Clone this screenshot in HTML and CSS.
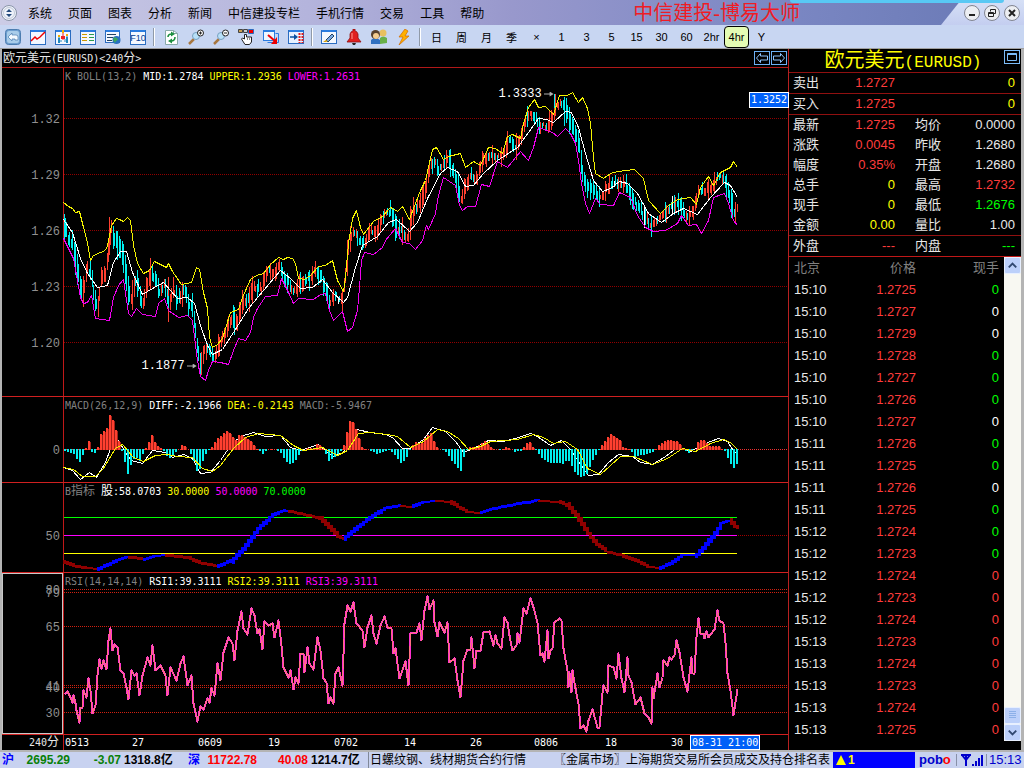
FILE: index.html
```html
<!DOCTYPE html>
<html lang="zh-CN">
<head>
    <meta charset="UTF-8">
    <meta name="viewport" content="width=device-width, initial-scale=1.0">
    <title>中信建投-博易大师</title>
    <link rel="stylesheet" href="styles.css">
</head>
<body>
    <header class="titlebar">
        <svg class="app-icon" viewBox="0 0 18 18">
            <circle cx="9" cy="9" r="7.5" fill="#eef2fa" stroke="#8a94a8"/>
            <circle cx="9" cy="9" r="5.5" fill="none" stroke="#c2cad8"/>
            <path d="M6 8l3-3 3 3zM6 10l3 3 3-3z" fill="#234a7c"/>
            <path d="M8 8h2v2H8z" fill="#eef2fa"/>
        </svg>
        <nav class="menu">
            <button>系统</button>
            <button>页面</button>
            <button>图表</button>
            <button>分析</button>
            <button>新闻</button>
            <button>中信建投专栏</button>
            <button>手机行情</button>
            <button>交易</button>
            <button>工具</button>
            <button>帮助</button>
        </nav>
        <h1 class="app-name">中信建投-博易大师</h1>
        <div class="window-buttons">
            <button aria-label="最小化"><svg viewBox="0 0 18 18"><circle cx="9" cy="9" r="7.5"/><path d="M6 11h6" stroke-width="2"/></svg></button>
            <button aria-label="还原"><svg viewBox="0 0 18 18"><circle cx="9" cy="9" r="7.5"/><path d="M7.5 7.500v-2h5v4h-2M5.500 8.500h5v4h-5zM5.500 9.500h5"/></svg></button>
            <button aria-label="关闭"><svg viewBox="0 0 18 18"><circle cx="9" cy="9" r="7.5"/><path d="M6 6l6 6M12 6l-6 6" stroke-width="2"/></svg></button>
        </div>
        <div class="top-tab"></div>
    </header>

    <div class="toolbar">
        <button aria-label="返回"><svg viewBox="0 0 16 16"><rect x=".5" y=".5" width="15" height="15" rx="3" fill="#6f9fcf" stroke="#4c7db0"/><rect x="2" y="2" width="12" height="12" rx="2" fill="#a9cdea"/><path d="M3 8l4-4v2h4q2 0 2 2v3h-3v-1H7v2z" fill="#f4faff" stroke="#4c7db0" stroke-width=".7"/></svg></button>
        <button aria-label="分时"><svg viewBox="0 0 16 16"><rect x=".5" y="1.500" width="15" height="14" fill="#f4f8ff" stroke="#2a6cc0"/><path d="M1 2h14" stroke="#2a7ce0" stroke-width="2"/><path d="M1 12l4-4 2 2 3-2 5-5" stroke="#e00" stroke-width="1.500" fill="none"/></svg></button>
        <button aria-label="K线"><svg viewBox="0 0 16 16"><rect x=".5" y="1.500" width="15" height="14" fill="#f4f8ff" stroke="#2a6cc0"/><path d="M1 2h14" stroke="#2a7ce0" stroke-width="2"/><path d="M3 9h2v5H3zM11 8h2v6h-2z" fill="#28b"/><path d="M6 7h4v3H6z" fill="#e22"/><path d="M8 4v7" stroke="#e22"/><path d="M4 7v7M12 6v8M6 11v2M10 10v3" stroke="#28b"/><path d="M7 1h2v3H7zM3 6h2v2H3zM11 5h2v2h-2z" fill="#f0b000"/></svg></button>
        <button aria-label="报价"><svg viewBox="0 0 16 16"><rect x=".5" y="1.500" width="15" height="14" fill="#f4f8ff" stroke="#2a6cc0"/><path d="M1 2h14" stroke="#2a7ce0" stroke-width="2"/><path d="M2 5.500h5M2 8.500h5M2 11.500h5" stroke="#c90"/><path d="M9 5.500h5M9 8.500h5M9 11.500h5" stroke="#2a9a50"/></svg></button>
        <button aria-label="资讯"><svg viewBox="0 0 16 16"><rect x=".5" y="1.500" width="14" height="12" fill="#f4f8ff" stroke="#2a6cc0"/><path d="M1 2h14" stroke="#2a7ce0" stroke-width="2"/><path d="M2 5.500h9M2 8.500h6M2 11.500h5" stroke="#246"/><circle cx="11.500" cy="11" r="4" fill="#2a70c0"/><path d="M9 8l3 1 1 2-2 1-1 2-2-3z" fill="#3aa860"/></svg></button>
        <button aria-label="F10"><svg viewBox="0 0 16 16"><rect x=".5" y="1.500" width="15" height="14" fill="#f4f8ff" stroke="#2a6cc0"/><path d="M1 2h14" stroke="#2a7ce0" stroke-width="2"/><text x="8" y="12" class="icon-text">F10</text></svg></button>
        <span class="sep"></span>
        <button aria-label="刷新"><svg viewBox="0 0 16 16"><path d="M2.500 1.500h8l4 3v11h-12z" fill="#fff" stroke="#8aa"/><path d="M10.500 1.500v3h4" fill="none" stroke="#8aa"/><path d="M5 8q0-3 4-3M12 8q0 4-4 4" fill="none" stroke="#1c9040" stroke-width="1.600"/><path d="M8 2.500l4 2.500-4 2.500zM9 9.500L5 12l4 2.500z" fill="#1c9040"/></svg></button>
        <button aria-label="放大"><svg viewBox="0 0 16 16"><path d="M1 15l5-5" stroke="#a87840" stroke-width="2.500"/><circle cx="8" cy="7" r="3.500" fill="#b8e0f8" stroke="#78a0c0"/><circle cx="12.500" cy="4" r="3" fill="#fff" stroke="#222"/><path d="M11 4h3M12.500 2.500v3" stroke="#222"/></svg></button>
        <button aria-label="缩小"><svg viewBox="0 0 16 16"><path d="M1 15l5-5" stroke="#a87840" stroke-width="2.500"/><circle cx="8" cy="7" r="3.500" fill="#b8e0f8" stroke="#78a0c0"/><circle cx="12.500" cy="4" r="3" fill="#fff" stroke="#222"/><path d="M11 4h3" stroke="#222"/></svg></button>
        <button aria-label="选择"><svg viewBox="0 0 16 16"><path d="M.5.5h4v3h-4z" fill="#cba050" stroke="#444"/><path d="M5.500 .5h4v3h-4z" fill="#ccc" stroke="#444"/><path d="M10.500 .5h5v4h-5z" fill="#e00" stroke="#2a6cc0"/><path d="M6.500 10V5.500h2V8h5v5l-2 2.500H7L3.500 10l1-1z" fill="#fff" stroke="#222"/><path d="M9.500 8v3M11.500 8v3" stroke="#888"/></svg></button>
        <button aria-label="弹出"><svg viewBox="0 0 16 16"><rect x=".5" y="1.500" width="11" height="10" fill="#eef6ff" stroke="#2a7ce0"/><path d="M1 2h11" stroke="#2a7ce0" stroke-width="2"/><path d="M4.500 13.500h11v-9h-3" fill="none" stroke="#2a7ce0"/><path d="M5 6l7 6" stroke="#e00" stroke-width="2"/><path d="M14 8v7H8z" fill="#e00"/></svg></button>
        <button aria-label="右移"><svg viewBox="0 0 16 16"><rect x=".5" y="1.500" width="15" height="13" fill="#e8f2ff" stroke="#2a6cc0"/><path d="M1 2h14" stroke="#2a7ce0" stroke-width="2"/><path d="M2 8h5" stroke="#0a50a0" stroke-width="1.500"/><path d="M6 5l4 3-4 3z" fill="#0a50a0"/><path d="M11.500 4v10M14.500 4v10" stroke="#e02020" stroke-width="2" stroke-dasharray="2 1"/></svg></button>
        <span class="sep"></span>
        <button aria-label="画线"><svg viewBox="0 0 16 16"><rect x=".5" y="1.500" width="15" height="13" fill="#f4f8ff" stroke="#2a6cc0"/><path d="M1 2h14" stroke="#2a7ce0" stroke-width="2"/><path d="M5 11l6-6 2 2-6 6z" fill="#7aa8e0" stroke="#246"/><path d="M2 13h3l2-1-2-1z" fill="#d8a000"/></svg></button>
        <button aria-label="预警"><svg viewBox="0 0 16 16"><path d="M1 13l3-4V5q1-3 3-3V0h2v2q2 0 3 3v4l3 4z" fill="#e02020" stroke="#901010" stroke-width=".8"/><path d="M6 4v6" stroke="#ff9a90"/><path d="M6 14h4l-1 2H7z" fill="#222"/></svg></button>
        <button aria-label="用户"><svg viewBox="0 0 16 16"><path d="M9 15V9q3-3 7 0v5z" fill="#68b048"/><circle cx="12" cy="4" r="3.500" fill="#e8c060"/><path d="M0 15V11q4-4 9 0v4z" fill="#3070c0"/><circle cx="4.500" cy="5.500" r="4.500" fill="#58402c"/><circle cx="5" cy="7" r="3" fill="#f4cc90"/></svg></button>
        <button aria-label="闪电"><svg viewBox="0 0 16 16"><path d="M9 0L3 8h4l-4 8 10-9H9l3-5z" fill="#ffb000" stroke="#d06800" stroke-width=".7"/></svg></button>
        <span class="sep"></span>
        <button>日</button>
        <button>周</button>
        <button>月</button>
        <button>季</button>
        <button>×</button>
        <button>1</button>
        <button>3</button>
        <button>5</button>
        <button>15</button>
        <button>30</button>
        <button>60</button>
        <button>2hr</button>
        <button class="active">4hr</button>
        <button>Y</button>
    </div>

    <main>
        <section class="charts">
            <div class="chart-head">
                <h2>欧元美元<span class="mono">(EURUSD)&lt;240</span>分<span class="mono">&gt;</span></h2>
                <div class="nav-buttons">
                    <button aria-label="上一个"><svg viewBox="0 0 14 12"><path d="M1.500 6l4-4.500v2.500h7v4h-7v2.500z"/></svg></button>
                    <button aria-label="下一个"><svg viewBox="0 0 14 12"><path d="M12.500 6l-4-4.500v2.500h-7v4h7v2.500z"/></svg></button>
                </div>
            </div>

            <div class="panel panel-price">
                <svg class="axis" viewBox="2 68 61 328">
                    <text x="60" y="123">1.32</text>
                    <text x="60" y="179">1.29</text>
                    <text x="60" y="235">1.26</text>
                    <text x="60" y="291">1.23</text>
                    <text x="60" y="347">1.20</text>
                </svg>
                <div class="plot">
                    <div class="legend"><span>K BOLL(13,2)</span><b class="white">MID:1.2784</b><b class="yellow">UPPER:1.2936</b><b class="magenta">LOWER:1.2631</b></div>
                    <svg id="price" viewBox="64 85 724 311" preserveAspectRatio="none"></svg>
                    <span class="callout high">1.3333<i></i></span>
                    <span class="callout low">1.1877<i></i></span>
                    <span class="price-mark">1.3252</span>
                </div>
            </div>

            <div class="panel panel-macd">
                <svg class="axis" viewBox="2 397 61 85">
                    <text x="60" y="454">0</text>
                </svg>
                <div class="plot">
                    <div class="legend"><span>MACD(26,12,9)</span><b class="white">DIFF:-2.1966</b><b class="yellow">DEA:-0.2143</b><span>MACD:-5.9467</span></div>
                    <svg id="macd" viewBox="64 414 724 68" preserveAspectRatio="none"></svg>
                </div>
            </div>

            <div class="panel panel-b">
                <svg class="axis" viewBox="2 483 61 89">
                    <text x="60" y="540">50</text>
                </svg>
                <div class="plot">
                    <div class="legend"><span>B<em>指标</em></span><b class="white"><em>股</em>:58.0703</b><b class="yellow">30.0000</b><b class="magenta">50.0000</b><b class="green">70.0000</b></div>
                    <svg id="bline" viewBox="64 500 724 72" preserveAspectRatio="none"></svg>
                </div>
            </div>

            <div class="panel panel-rsi">
                <svg class="axis selected" viewBox="3 574 59 159">
                    <text x="60" y="594">80</text>
                    <text x="60" y="597">79</text>
                    <text x="60" y="631">65</text>
                    <text x="60" y="690">41</text>
                    <text x="60" y="692">40</text>
                    <text x="60" y="717">30</text>
                </svg>
                <div class="plot">
                    <div class="legend"><span>RSI(14,14,14)</span><b class="white">RSI1:39.3111</b><b class="yellow">RSI2:39.3111</b><b class="magenta">RSI3:39.3111</b></div>
                    <svg id="rsi" viewBox="64 590 724 144" preserveAspectRatio="none"></svg>
                </div>
            </div>

            <div class="time-row">
                <div class="period"><span class="mono">240</span>分</div>
                <svg class="dates" viewBox="64 735 724 15" preserveAspectRatio="xMinYMid meet">
                    <text x="65" y="746">0513</text>
                    <text x="132" y="746">27</text>
                    <text x="198" y="746">0609</text>
                    <text x="268" y="746">19</text>
                    <text x="334" y="746">0702</text>
                    <text x="404" y="746">14</text>
                    <text x="470" y="746">26</text>
                    <text x="534" y="746">0806</text>
                    <text x="605" y="746">18</text>
                    <text x="671" y="746">30</text>
                    <rect x="690.500" y="735.500" width="69" height="14" fill="#0060f8" stroke="#fff"/>
                    <text x="692" y="746">08-31 21:00</text>
                </svg>
            </div>
        </section>

        <aside class="quote">
            <div class="quote-title">
                <h2>欧元美元<span>(EURUSD)</span></h2>
                <button aria-label="窗口"><svg viewBox="0 0 16 14"><rect x=".5" y=".5" width="15" height="13"/><path d="M3.500 3.500h9v7h-9zM3 4.500h10"/></svg></button>
            </div>
            <div class="quote-row single"><span>卖出</span><span class="red">1.2727</span><span class="yellow end">0</span></div>
            <div class="quote-row single"><span>买入</span><span class="red">1.2725</span><span class="yellow end">0</span></div>
            <div class="stats">
                <div class="quote-row"><span>最新</span><span class="red">1.2725</span><span>均价</span><span>0.0000</span></div>
                <div class="quote-row"><span>涨跌</span><span class="red">0.0045</span><span>昨收</span><span>1.2680</span></div>
                <div class="quote-row"><span>幅度</span><span class="red">0.35%</span><span>开盘</span><span>1.2680</span></div>
                <div class="quote-row"><span>总手</span><span class="yellow">0</span><span>最高</span><span class="red">1.2732</span></div>
                <div class="quote-row"><span>现手</span><span class="yellow">0</span><span>最低</span><span class="green">1.2676</span></div>
                <div class="quote-row"><span>金额</span><span class="yellow">0.00</span><span>量比</span><span>1.00</span></div>
            </div>
            <div class="quote-row line"><span>外盘</span><span class="red">---</span><span>内盘</span><span class="green">---</span></div>
            <div class="ticks-wrap">
                <table class="ticks">
                    <thead><tr><th>北京</th><th>价格</th><th>现手</th></tr></thead>
                    <tbody>
                        <tr><td>15:10</td><td>1.2725</td><td class="green">0</td></tr>
                        <tr><td>15:10</td><td>1.2727</td><td class="white">0</td></tr>
                        <tr><td>15:10</td><td>1.2729</td><td class="white">0</td></tr>
                        <tr><td>15:10</td><td>1.2728</td><td class="green">0</td></tr>
                        <tr><td>15:10</td><td>1.2727</td><td class="green">0</td></tr>
                        <tr><td>15:10</td><td>1.2726</td><td class="green">0</td></tr>
                        <tr><td>15:10</td><td>1.2727</td><td class="white">0</td></tr>
                        <tr><td>15:11</td><td>1.2726</td><td class="green">0</td></tr>
                        <tr><td>15:11</td><td>1.2725</td><td class="green">0</td></tr>
                        <tr><td>15:11</td><td>1.2726</td><td class="white">0</td></tr>
                        <tr><td>15:11</td><td>1.2725</td><td class="green">0</td></tr>
                        <tr><td>15:12</td><td>1.2724</td><td class="green">0</td></tr>
                        <tr><td>15:12</td><td>1.2723</td><td class="green">0</td></tr>
                        <tr><td>15:12</td><td>1.2724</td><td>0</td></tr>
                        <tr><td>15:12</td><td>1.2723</td><td>0</td></tr>
                        <tr><td>15:12</td><td>1.2724</td><td>0</td></tr>
                        <tr><td>15:13</td><td>1.2723</td><td>0</td></tr>
                        <tr><td>15:13</td><td>1.2724</td><td>0</td></tr>
                        <tr><td>15:13</td><td>1.2723</td><td>0</td></tr>
                        <tr><td>15:13</td><td>1.2724</td><td>0</td></tr>
                        <tr><td>15:13</td><td>1.2725</td><td>0</td></tr>
                    </tbody>
                </table>
                <div class="scrollbar">
                    <button aria-label="向上"><svg viewBox="0 0 16 16"><path d="M4 10l4-4 4 4"/></svg></button>
                    <div class="thumb"></div>
                    <button aria-label="向下"><svg viewBox="0 0 16 16"><path d="M4 6l4 4 4-4"/></svg></button>
                </div>
            </div>
        </aside>
    </main>

    <footer class="status">
        <div class="index">
            <b class="name">沪</b><b class="value down">2695.29</b><b class="change down">-3.07</b><b class="amount">1318.8亿</b>
        </div>
        <div class="index second">
            <b class="name">深</b><b class="value up">11722.78</b><b class="change up">40.08</b><b class="amount">1214.7亿</b>
        </div>
        <div class="ticker"><span>日螺纹钢、线材期货合约行情</span><span>〖金属市场〗上海期货交易所会员成交及持仓排名表</span></div>
        <div class="alert"><svg viewBox="0 0 10 10"><path d="M5 0l5 10H0z"/></svg>1</div>
        <div class="brand">pob<span>o</span></div>
        <div class="signal"><svg viewBox="0 0 22 12"><path d="M0 1h10M1 1l4 5 4-5M5 1v11" fill="none" stroke="#00c" stroke-width="2"/><path d="M11 10h2v2h-2zM14 7h2v5h-2zM17 4h2v8h-2zM20 1h2v11h-2z" fill="#00c"/></svg></div>
        <div class="clock">15:13</div>
    </footer>
    <script src="charts.js"></script>
</body>
</html>
```
FILE: styles.css
```css
* {
    box-sizing: border-box;
}
body {
    margin: 0;
    min-height: 100vh;
    display: grid;
    grid-template-rows: 25px 24px 1fr 16px;
    background: #000;
    color: #e8e8e8;
    font: 12px "Liberation Sans", "Noto Sans CJK SC", sans-serif;
}
button {
    padding: 0;
    border: none;
    background: none;
    color: inherit;
    font: inherit;
}
h1, h2 {
    margin: 0;
    font-weight: normal;
}
svg {
    display: block;
}
.red { color: #ff3c3c; }
.yellow { color: #ff0; }
.green { color: #0f0; }
.magenta { color: #f0f; }
.white { color: #fff; }
.mono {
    font: 10px "DejaVu Sans Mono", monospace;
}

/* title bar */
.titlebar {
    position: relative;
    display: flex;
    align-items: center;
    color: #000;
    background: linear-gradient(to right, #cccce6 0, #b4b4dc 30%, #9898cc 50%, #7c88c4 75%, #6878b4 100%);
    overflow: hidden;
}
.app-icon {
    width: 18px;
    height: 18px;
    margin-right: 10px;
}
.menu {
    display: flex;
    gap: 16px;
    flex: 1;
    white-space: nowrap;
}
.app-name {
    font: 20px/20px "Liberation Serif", "Noto Sans CJK SC", serif;
    color: #f01c24;
    margin-right: 224px;
    white-space: nowrap;
}
.window-buttons {
    position: absolute;
    right: 0;
    top: 0;
    height: 25px;
    width: 83px;
    display: flex;
    justify-content: flex-end;
    align-items: center;
    gap: 2px;
    padding-right: 3px;
    background: linear-gradient(#d6e0f6, #c4cef0);
    clip-path: polygon(20px 0, 100% 0, 100% 100%, 0 100%);
}
.window-buttons svg {
    width: 18px;
    height: 18px;
    fill: #eceef2;
    stroke: #808490;
}
.window-buttons path {
    fill: none;
    stroke: #222;
}
.top-tab {
    position: absolute;
    right: 20px;
    top: 0;
    width: 214px;
    height: 3px;
    background: #58c8f4;
    border-radius: 0 0 3px 3px;
}

/* toolbar */
.toolbar {
    display: flex;
    align-items: center;
    color: #000;
    background: #c8d6f2;
    border-bottom: 1px solid #a0a0a0;
}
.toolbar button {
    width: 25px;
    height: 22px;
    display: flex;
    align-items: center;
    justify-content: center;
    font-size: 11px;
}
.toolbar svg {
    width: 16px;
    height: 16px;
}
.toolbar .active {
    background: #e4fcb4;
    border: 1px solid #000;
    border-radius: 4px;
}
.icon-text {
    font: 9px "Liberation Sans", sans-serif;
    text-anchor: middle;
    fill: #003c90;
}
.sep {
    width: 8px;
    height: 18px;
    background: linear-gradient(to right, transparent 3px, #909aa8 3px, #909aa8 4px, #fff 4px, #fff 5px, transparent 5px);
}

main {
    display: grid;
    grid-template-columns: 1fr 232px;
    border: solid #b4b4b4;
    border-width: 0 3px 2px 2px;
}

/* charts */
.charts {
    display: flex;
    flex-direction: column;
    border-right: 1px solid #b82020;
    min-width: 0;
}
.chart-head {
    height: 19px;
    display: flex;
    align-items: center;
    justify-content: space-between;
    border-bottom: 1px solid #b01818;
    padding: 0 1px 0 1px;
}
.chart-head h2 {
    font-size: 12px;
    line-height: 16px;
}
.nav-buttons {
    display: flex;
    gap: 1px;
}
.nav-buttons button {
    width: 16px;
    height: 14px;
    border: 1px solid #6cb0f4;
}
.nav-buttons svg {
    width: 14px;
    height: 12px;
    fill: none;
    stroke: #8cc4ff;
}
.panel {
    display: grid;
    grid-template-columns: 61px 1fr;
    grid-template-rows: 100%;
    border-bottom: 1px solid #d02020;
    min-height: 0;
}
/* grow factors leave out the 1px border, which flex adds itself */
.panel-price { flex: 328 1 0; }
.panel-macd { flex: 85 1 0; }
.panel-b { flex: 89 1 0; }
.panel-rsi { flex: 161 1 0; }
.axis {
    width: 100%;
    height: 100%;
}
.axis.selected {
    border: 1px solid #c8c8c8;
}
.axis text {
    font: 12px "Liberation Mono", monospace;
    fill: #909090;
    text-anchor: end;
}
.plot {
    position: relative;
    display: flex;
    flex-direction: column;
    border-left: 1px solid #c01818;
    min-width: 0;
}
.plot > svg {
    flex: 1;
    width: 100%;
    min-height: 0;
    overflow: visible;
    shape-rendering: crispEdges;
}
.legend {
    height: 17px;
    display: flex;
    gap: 6px;
    align-items: center;
    padding-left: 1px;
    font: 10px/17px "DejaVu Sans Mono", "Noto Sans CJK SC", monospace;
    color: #808080;
    white-space: nowrap;
}
.legend b {
    font-weight: normal;
}
.legend em {
    font-size: 12px;
    font-style: normal;
}
.callout {
    position: absolute;
    display: flex;
    align-items: center;
    gap: 2px;
    font: 12px/14px "Liberation Mono", monospace;
    color: #fff;
}
.callout i {
    width: 10px;
    height: 5px;
    background: #b0b0b0;
    clip-path: polygon(0 2px, 6px 2px, 6px 0, 100% 50%, 6px 100%, 6px 3px, 0 3px);
}
.high {
    left: 60%;
    top: 19px;
}
.low {
    left: 10.7%;
    bottom: 23px;
}
.price-mark {
    position: absolute;
    right: -1px;
    top: 24px;
    padding: 0 1px;
    border: 1px solid #fff;
    background: #0060f8;
    color: #fff;
    font: 10px/14px "DejaVu Sans Mono", monospace;
}
.time-row {
    display: grid;
    grid-template-columns: 61px 1fr;
    height: 15px;
}
.period {
    text-align: right;
    padding-right: 4px;
    line-height: 14px;
}
.dates {
    width: 100%;
    height: 15px;
    border-left: 1px solid #c01818;
}
.dates text {
    font: 10px "DejaVu Sans Mono", monospace;
    fill: #fff;
}

/* quote panel */
.quote {
    display: flex;
    flex-direction: column;
    font-size: 13px;
}
.quote-title {
    position: relative;
    display: flex;
    justify-content: center;
    height: 24px;
    padding-right: 4px;
    border-bottom: 1px solid #901010;
    color: #ff0;
}
.quote-title h2 {
    font-size: 20px;
    line-height: 23px;
}
.quote-title span {
    font-family: "Liberation Mono", monospace;
    font-size: 16px;
}
.quote-title button {
    position: absolute;
    right: 1px;
    top: 1px;
}
.quote-title svg {
    width: 16px;
    height: 14px;
    fill: none;
    stroke: #7cbcf8;
}
.quote-row {
    display: grid;
    grid-template-columns: 40px 62px 38px 82px;
    height: 20px;
    padding-left: 4px;
    line-height: 20px;
}
.quote-row span:nth-child(even) {
    text-align: right;
}
.quote-row.single {
    height: 21px;
    border-bottom: 1px solid #901010;
}
.single .end {
    grid-column: 3 / 5;
    text-align: right;
}
.quote-row span:nth-child(3) {
    padding-left: 20px;
    margin-right: -20px;
}
.quote-row.single .end {
    margin: 0;
}
.stats {
    border-bottom: 1px solid #901010;
}
.quote-row.line {
    height: 21px;
    border-bottom: 1px solid #c01818;
}
.ticks-wrap {
    flex: 1;
    display: flex;
    align-items: flex-start;
}
.ticks {
    flex: 1;
    border-collapse: collapse;
    table-layout: fixed;
}
.ticks th, .ticks td {
    height: 22px;
    padding: 0;
    line-height: 22px;
    text-align: right;
}
.ticks th {
    font-weight: normal;
    color: #808080;
}
.ticks td {
    color: #ff3c3c;
}
.ticks td:first-child {
    color: #e8e8e8;
}
.ticks th:first-child, .ticks td:first-child {
    width: 60px;
    padding-left: 5px;
    text-align: left;
}
.ticks th:last-child, .ticks td:last-child {
    width: 88px;
    padding-right: 5px;
}
.ticks td.green { color: #0f0; }
.ticks td.white { color: #fff; }
.scrollbar {
    align-self: stretch;
    display: flex;
    flex-direction: column;
    width: 17px;
    margin-bottom: 9px;
    background: #f8f8f2;
}
.scrollbar button, .thumb {
    height: 17px;
    background: #bcd0fa;
    border: 1px solid #e8f0ff;
    border-radius: 2px;
}
.scrollbar svg {
    width: 15px;
    height: 15px;
    fill: none;
    stroke: #304870;
    stroke-width: 2;
}
.thumb {
    margin-top: auto;
    background: repeating-linear-gradient(#8cb0e8 0, #8cb0e8 1px, transparent 1px, transparent 2px) 4px 3px / 7px 8px no-repeat #bcd0fa;
}

/* status bar */
.status {
    display: flex;
    align-items: center;
    color: #000;
    background: #c8d2f0;
    line-height: 16px;
    white-space: nowrap;
    overflow: hidden;
}
.index {
    display: flex;
    width: 187px;
    padding-left: 2px;
}
.index .name {
    width: 16px;
    color: #00f;
}
.index .value {
    width: 52px;
    text-align: right;
}
.index .change {
    width: 51px;
    text-align: right;
}
.index .amount {
    flex: 1;
    padding-left: 3px;
}
.index.second {
    width: 182px;
    padding-left: 1px;
    border-right: 1px solid #808898;
}
.index.second .name {
    width: 17px;
}
.down { color: #088008; }
.up { color: #f00; }
.ticker {
    flex: 1;
    display: flex;
    gap: 28px;
    padding-left: 1px;
    overflow: hidden;
}
.alert {
    display: flex;
    align-items: center;
    gap: 2px;
    width: 82px;
    height: 16px;
    padding-left: 3px;
    background: #00f;
    color: #ff0;
    font-weight: bold;
}
.alert svg {
    width: 10px;
    height: 10px;
    fill: #ff0;
}
.brand {
    width: 41px;
    padding-left: 4px;
    font: bold 13px/16px "Liberation Sans", sans-serif;
    color: #00c;
}
.brand span {
    color: #f00;
}
.signal {
    width: 31px;
    padding-left: 4px;
    border: solid #8890a8;
    border-width: 0 1px;
}
.signal svg {
    width: 22px;
    height: 12px;
}
.clock {
    width: 37px;
    padding-left: 2px;
    font-size: 13px;
    color: #00c;
}
```
FILE: charts.js
```javascript
const NS = 'http://www.w3.org/2000/svg';
const START = 64, END = 737, EDGE = 788;

function add(svg, tag, attrs) {
    const el = document.createElementNS(NS, tag);
    for (const k in attrs) el.setAttribute(k, attrs[k]);
    svg.appendChild(el);
}

// "x,y x,y ..." -> [[x, y], ...]
function parse(text) {
    return text.trim().split(/\s+/).map(p => p.split(',').map(Number));
}

function valueAt(points, x) {
    for (let i = 1; i < points.length; i++) {
        const [x0, y0] = points[i - 1], [x1, y1] = points[i];
        if (x <= x1) return x1 === x0 ? y1 : y0 + (y1 - y0) * (x - x0) / (x1 - x0);
    }
    return points[points.length - 1][1];
}

function line(svg, text, color, width = 1) {
    add(svg, 'polyline', {
        points: parse(text).map(([x, y]) => `${x + 0.5},${y + 0.5}`).join(' '),
        fill: 'none', stroke: color, 'stroke-width': width, 'stroke-linejoin': 'round'
    });
}

function grid(svg, y, color) {
    add(svg, 'path', { d: `M${START} ${y + 0.5}H${EDGE}`, stroke: color, 'stroke-dasharray': '1 1' });
}

// repeatable noise so every load draws the same bars
let seed = 11;
function noise() {
    seed = (seed * 16807) % 2147483647;
    return seed / 2147483647;
}

/* price + BOLL */
const price = document.getElementById('price');
[118, 174, 230, 286, 342].forEach(y => grid(price, y, '#900000'));

const closes = parse(`64,225 68,238 72,243 76,262 80,285 83,292 87,270 91,270 94,300 98,308 101,275 105,275 108,255 111,225
    114,240 118,245 123,258 127,285 131,300 135,280 139,290 142,305 146,290 151,275 155,278 159,290 164,285 169,305 173,290
    178,300 184,290 188,305 192,305 196,340 200,365 203,352 208,348 214,358 220,342 226,330 232,315 236,325 241,305 246,300
    249,300 253,285 261,290 267,272 275,272 280,265 285,280 293,290 302,282 310,278 315,270 320,275 325,290 330,302 335,297
    342,300 346,270 349,240 354,232 358,238 365,245 370,230 376,232 382,218 390,210 396,228 402,232 408,238 412,210 420,205
    425,190 430,165 435,165 440,170 448,160 455,175 460,200 464,190 470,175 476,180 484,158 490,153 498,158 503,155 508,140
    515,147 520,138 526,118 533,115 540,125 547,125 552,120 556,102 562,105 570,120 578,140 583,178 588,188 594,190 600,200
    607,188 615,180 620,185 627,186 633,200 640,210 650,225 660,218 670,208 678,203 685,215 693,210 698,190 705,192 712,185
    718,178 724,178 730,200 734,213 737,208`);
const candles = { '#ff4030': '', '#00f0f0': '', '#ffffff': '' };
for (let x = START; x <= END; x += x % 3 ? 1 : 2) {
    const mid = valueAt(closes, x) + (noise() - 0.5) * 6;
    const slope = valueAt(closes, x + 2) - valueAt(closes, x - 2);
    const half = 2 + noise() * noise() * 12 + Math.min(Math.abs(slope) / 3, 5);
    const up = slope + (noise() - 0.5) * 14 < 0;
    const color = noise() > 0.98 ? '#ffffff' : up ? '#ff4030' : '#00f0f0';
    candles[color] += `M${x + 0.5} ${Math.round(mid - half)}V${Math.round(mid + half)}`;
}
candles['#00f0f0'] += 'M554.5 94V108M64.5 215V240';
candles['#ff4030'] += 'M109.5 217V255M446.5 150V168M150.5 258V290M168.500 277V322';
for (const color in candles) add(price, 'path', { d: candles[color], stroke: color });

line(price, `63,202 68,206 72,208 75,212 79,211 82,223 87,242 90,260 93,255 100,252 105,250 107,245 111,225 116,218 119,219 123,221
    127,217 130,220 133,245 137,263 143,273 149,270 154,261 166,267 168,263 172,271 181,284 191,282 196,267 199,269 203,292 207,308
    209,337 212,347 217,344 222,338 230,312 238,309 242,297 250,279 256,275 263,273 270,264 278,257 283,259 287,257 292,258 295,263
    298,278 304,279 310,275 318,266 325,265 332,260 337,280 343,291 345,277 348,243 352,218 356,210 360,227 363,234 373,221 382,216
    390,207 397,211 402,206 409,219 413,208 420,190 425,180 432,149 436,147 443,159 448,156 460,153 465,167 473,161 480,165 488,147
    495,148 502,153 507,136 512,134 520,138 523,123 528,107 534,99 538,107 545,106 553,114 559,95 567,95 572,92 578,102 582,97
    587,108 590,123 593,157 595,173 603,178 610,173 617,171 634,169 643,178 648,200 660,213 668,205 677,199 690,197 696,204 700,187
    708,176 713,185 720,172 730,167 733,161 737,167`, '#f4f400');
line(price, `63,219 72,232 80,258 87,273 97,287 107,285 113,262 120,251 126,251 132,272 142,294 152,288 163,282 177,298 187,297
    194,303 200,325 207,345 212,354 222,349 233,332 248,308 263,290 280,270 290,278 300,288 312,287 322,279 332,292 343,302 347,297
    355,267 362,245 377,236 388,222 396,219 409,231 417,222 427,198 440,173 447,167 457,171 465,186 473,185 483,173 497,160 517,147
    528,132 538,118 546,119 553,122 565,111 571,112 578,127 585,153 593,180 602,191 610,188 619,181 627,183 637,193 648,213 661,222
    673,213 683,208 697,214 710,197 724,182 730,185 737,197`, '#fff');
line(price, `63,238 73,258 80,297 83,303 87,302 91,295 95,318 109,320 113,297 118,285 123,279 128,313 131,316 136,308 142,314 155,316
    158,303 164,298 168,310 178,317 187,315 192,320 197,360 200,376 205,380 208,370 212,361 220,362 228,364 233,350 238,338 245,340
    250,332 253,317 257,308 265,296 277,295 281,278 288,292 293,303 298,298 313,299 320,294 325,293 329,310 333,320 342,311 347,331
    352,327 357,310 359,287 361,260 364,252 373,254 382,247 385,240 395,228 402,242 409,243 415,249 422,240 426,225 428,229 435,213
    438,195 443,177 455,185 459,205 462,210 467,206 475,206 481,184 489,186 497,161 507,167 520,151 528,160 533,147 538,127 552,132
    557,136 565,128 570,133 575,143 578,160 581,183 585,203 589,213 595,198 600,204 613,205 619,192 630,197 637,215 645,227 653,231
    665,230 677,223 681,215 688,225 696,224 701,233 708,220 713,197 724,193 728,203 733,220 737,225`, '#f000f0');

/* MACD */
const macd = document.getElementById('macd');
grid(macd, 449, '#f03030');
const hist = parse(`64,-2 70,-4 75,-5 79,-16 83,-6 87,4 89,9 92,-3 95,-4 98,3 101,16 104,19 107,22 110,35 113,30 116,20 120,5
    123,-5 128,-25 132,-13 136,-8 140,-12 144,-3 147,4 152,15 156,6 161,2 165,-4 169,-10 174,-5 179,0 183,6 188,0 193,-8 198,-26
    202,-15 206,-5 211,2 218,12 223,16 228,20 232,14 236,10 240,17 245,13 252,8 257,1 263,-5 267,-1 272,1 280,-3 288,-15 294,-14
    300,-4 308,2 314,2 318,7 323,1 329,-12 335,-8 343,0 347,18 350,29 354,27 358,15 362,3 367,0 377,-5 385,-2 390,-1 395,-6
    401,-14 406,-10 412,4 416,8 421,7 426,13 431,17 436,4 440,0 447,-3 452,-12 461,-22 465,-4 470,3 477,3 485,9 492,2 500,-1
    507,4 515,-3 521,-2 529,10 534,1 543,-10 550,-14 558,-14 563,-15 568,-10 576,-25 582,-29 587,-25 592,-13 598,-3 603,7 611,16
    620,10 624,0 628,3 635,-8 643,-6 652,-4 658,4 667,10 678,9 684,0 688,-5 695,0 699,10 704,10 711,3 718,5 725,-2 733,-20 737,-15`);
// solid bars, with every third column a shade darker
let red = '', cyan = '', redGap = '';
for (let x = START; x < END; x += 3) {
    const h = Math.round(valueAt(hist, x + 1));
    if (h > 0) {
        red += `M${x} ${450 - h}h2v${h}h-2z`;
        redGap += `M${x + 2} ${451 - h}h1v${h - 1}h-1z`;
    } else if (h < 0) {
        cyan += `M${x} 449h2v${-h}h-2z`;
    }
}

line(macd, `63,467 72,470 80,479 89,472 96,477 105,462 113,440 118,440 125,452 131,460 142,463 152,450 165,452 172,457 183,454
    192,458 200,473 210,472 220,460 230,445 240,436 253,432 265,436 280,435 290,447 300,450 318,444 332,456 343,452 350,435 356,429
    370,432 385,434 392,437 402,448 410,448 423,439 432,427 445,431 455,441 463,452 475,447 488,440 502,441 515,438 530,433 537,436
    550,445 561,440 570,449 580,464 588,475 598,474 608,462 618,454 632,456 640,462 652,464 665,456 677,447 690,451 705,443 718,438
    727,441 734,452 737,452`, '#fff');
add(macd, 'path', { d: redGap, fill: '#a02018' });
add(macd, 'path', { d: red, fill: '#ff4030' });
add(macd, 'path', { d: cyan, fill: '#00f0f0' });
line(macd, `63,467 73,469 82,476 95,476 103,468 115,448 122,444 133,457 143,461 155,455 167,454 177,456 192,457 202,468 212,471
    220,465 233,448 245,437 258,433 280,435 293,445 303,450 322,447 337,455 347,450 358,433 370,432 387,434 397,436 410,447 423,441
    437,429 447,431 458,438 468,449 480,446 490,441 517,439 533,434 543,437 553,443 565,441 577,449 587,468 600,474 610,465 620,456
    633,456 652,464 667,458 682,448 695,451 710,443 723,439 730,442 737,449`, '#f4f400');

/* B */
const bline = document.getElementById('bline');
grid(bline, 535, '#a00000');
[[517, '#0f0'], [535, '#f0f'], [553, '#ff0']].forEach(([y, color]) => {
    add(bline, 'path', { d: `M${START} ${y + 0.5}H${END}`, stroke: color });
});
const RISE = '#0000ff', FALL = '#900000';
const ribbon = [
    [FALL, '63,562 75,566 85,568 97,569'],
    [RISE, '97,569 108,564 118,559 128,557'],
    [FALL, '128,557 143,559'],
    [RISE, '143,559 155,556 165,555'],
    [FALL, '165,555 188,558 200,563 217,566'],
    [RISE, '217,566 232,560 243,548 258,528 272,515 282,510 288,511'],
    [FALL, '288,511 305,515 320,518 332,530 341,539 344,538'],
    [RISE, '344,538 357,527 370,517 385,508 400,505'],
    [FALL, '400,506 412,507'],
    [RISE, '412,506 422,502 435,501'],
    [FALL, '435,501 450,502 458,507 468,512 480,513'],
    [RISE, '480,512 495,508 515,504 528,502 538,500'],
    [FALL, '538,501 560,502 568,506 577,517 587,533 597,545 607,552 620,555 635,560 648,567 659,568'],
    [RISE, '659,568 670,563 682,555 696,555 705,545 715,532 722,522 730,521'],
    [FALL, '730,521 737,528']
];
ribbon.forEach(([color, text]) => {
    const points = parse(text);
    const from = points[0][0], to = points[points.length - 1][0];
    let d = '';
    for (let x = from; x < to; x += 3) {
        const y = valueAt(points, x);
        const size = Math.round(2 + Math.abs(valueAt(points, Math.min(x + 3, to)) - y) * 1.5);
        d += `M${x} ${Math.round(y - size / 2)}h3v${size}h-3z`;
    }
    add(bline, 'path', { d, fill: color });
});

/* RSI */
const rsi = document.getElementById('rsi');
[589, 592, 626, 685, 687, 712].forEach(y => grid(rsi, y, '#d02010'));
const rsiLine = `64,694 67,691 70,697 72,702 73,695 75,703 76,710 79,722 80,707 82,707 83,690 86,697 88,678 90,690 92,713 95,705
    97,675 99,659 101,668 103,660 106,669 108,640 110,628 112,650 114,644 117,647 120,670 123,673 126,687 128,699 131,670 134,675
    136,673 139,695 142,675 147,657 150,665 152,645 155,670 160,665 165,675 167,695 170,667 176,680 180,663 183,656 187,685 191,675
    193,703 197,721 200,706 203,709 207,698 209,702 211,688 214,695 217,663 220,680 223,652 228,637 232,643 234,660 237,630 241,611
    243,628 247,634 251,608 254,615 257,633 259,629 262,649 264,621 268,625 272,623 274,637 278,620 281,645 283,667 288,677 290,670
    293,689 295,677 298,683 300,653 303,653 304,672 307,647 309,663 313,669 317,637 320,650 323,678 326,682 328,703 330,697 333,703
    335,673 338,667 342,685 344,623 347,605 350,611 353,602 356,623 362,630 364,647 367,627 371,615 373,633 376,643 380,625 384,616
    387,627 391,628 393,653 395,648 399,678 405,661 408,685 410,633 416,632 419,623 421,640 424,610 427,596 429,609 433,600 434,622
    437,636 439,622 442,628 444,632 447,622 449,662 454,658 457,680 460,697 463,660 467,649 470,649 471,637 474,668 476,650 480,650
    483,632 489,631 493,645 495,635 497,643 501,648 504,617 507,622 509,635 512,650 516,645 517,633 519,642 523,608 526,613 530,598
    533,607 537,622 540,655 542,653 544,661 547,630 548,658 550,650 552,648 554,622 559,618 561,620 563,648 567,670 568,687 569,672
    571,692 572,670 575,688 578,703 580,728 583,725 586,731 588,720 592,709 597,727 599,727 602,693 603,685 607,692 608,665 613,667
    616,678 618,653 621,678 624,692 627,657 628,675 631,682 635,704 640,697 644,713 648,717 651,723 652,687 653,698 657,673 659,687
    662,677 663,660 667,665 669,657 671,659 674,655 676,640 679,652 683,677 687,691 691,657 692,673 694,673 696,637 698,618 700,633
    703,633 704,638 706,631 708,637 714,629 717,610 719,620 723,623 725,642 727,673 730,690 733,715 737,689`;
line(rsi, rsiLine, '#ff30d0', 2);
line(rsi, rsiLine, '#ff7080', 1);
```
